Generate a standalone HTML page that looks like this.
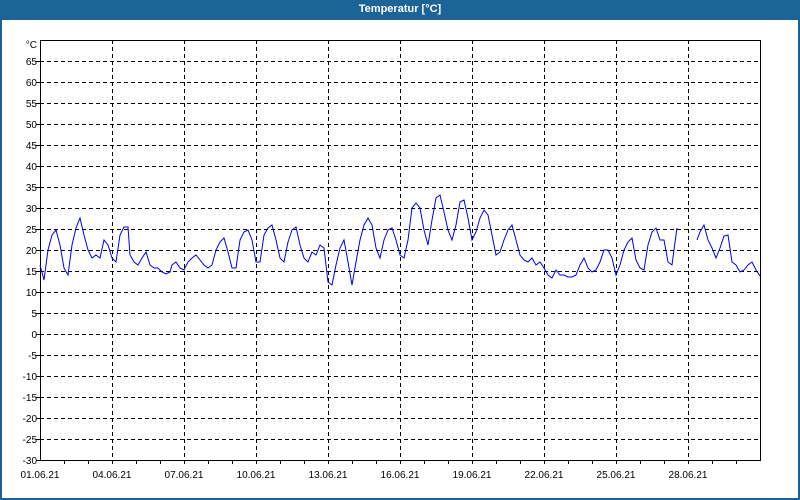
<!DOCTYPE html>
<html><head><style>
body{margin:0;width:800px;height:500px;overflow:hidden;background:#fff;font-family:"Liberation Sans",sans-serif}
.frame{position:absolute;left:0;top:0;width:796px;height:478px;border:2px solid #1c6497;border-top:none;top:20px}
.title{position:absolute;left:0;top:0;width:800px;height:20px;background:#1c6497;color:#fff;font-weight:bold;font-size:11px;text-align:center;line-height:19px}
</style></head><body>
<div class="title">Temperatur [°C]</div>
<div class="frame"></div>
<svg width="800" height="500" style="position:absolute;left:0;top:0" font-family="Liberation Sans, sans-serif" font-size="10">
<g stroke="#000" stroke-dasharray="4,3" stroke-width="1">
<path d="M40 61.5H760M40 82.5H760M40 103.5H760M40 124.5H760M40 145.5H760M40 166.5H760M40 187.5H760M40 208.5H760M40 229.5H760M40 250.5H760M40 271.5H760M40 292.5H760M40 313.5H760M40 334.5H760M40 355.5H760M40 376.5H760M40 397.5H760M40 418.5H760M40 439.5H760"/>
<path d="M112.5 40V460M184.5 40V460M256.5 40V460M328.5 40V460M400.5 40V460M472.5 40V460M544.5 40V460M616.5 40V460M688.5 40V460"/>
</g>
<rect x="40.5" y="40.5" width="720" height="420" fill="none" stroke="#000"/>
<g stroke="#000"><path d="M64.5 460v4M88.5 460v4M112.5 460v4M136.5 460v4M160.5 460v4M184.5 460v4M208.5 460v4M232.5 460v4M256.5 460v4M280.5 460v4M304.5 460v4M328.5 460v4M352.5 460v4M376.5 460v4M400.5 460v4M424.5 460v4M448.5 460v4M472.5 460v4M496.5 460v4M520.5 460v4M544.5 460v4M568.5 460v4M592.5 460v4M616.5 460v4M640.5 460v4M664.5 460v4M688.5 460v4M712.5 460v4M736.5 460v4M36 460.5h4M36 439.5h4M36 418.5h4M36 397.5h4M36 376.5h4M36 355.5h4M36 334.5h4M36 313.5h4M36 292.5h4M36 271.5h4M36 250.5h4M36 229.5h4M36 208.5h4M36 187.5h4M36 166.5h4M36 145.5h4M36 124.5h4M36 103.5h4M36 82.5h4M36 61.5h4"/></g>
<g text-anchor="end" fill="#000">
<text x="37" y="48">°C</text><text x="37" y="65">65</text><text x="37" y="86">60</text><text x="37" y="107">55</text><text x="37" y="128">50</text><text x="37" y="149">45</text><text x="37" y="170">40</text><text x="37" y="191">35</text><text x="37" y="212">30</text><text x="37" y="233">25</text><text x="37" y="254">20</text><text x="37" y="275">15</text><text x="37" y="296">10</text><text x="37" y="317">5</text><text x="37" y="338">0</text><text x="37" y="359">-5</text><text x="37" y="380">-10</text><text x="37" y="401">-15</text><text x="37" y="422">-20</text><text x="37" y="443">-25</text><text x="37" y="464">-30</text>
</g>
<g text-anchor="middle" fill="#000">
<text x="40" y="478">01.06.21</text><text x="112" y="478">04.06.21</text><text x="184" y="478">07.06.21</text><text x="256" y="478">10.06.21</text><text x="328" y="478">13.06.21</text><text x="400" y="478">16.06.21</text><text x="472" y="478">19.06.21</text><text x="544" y="478">22.06.21</text><text x="616" y="478">25.06.21</text><text x="688" y="478">28.06.21</text>
</g>
<g fill="none" stroke="#0000ee" stroke-width="1">
<polyline points="40,265 44,280 48,250 52,235 56,230 60,245 64,268 68,275 72,245 76,228 80,218 84,235 88,250 92,258 96,255 100,258 104,240 108,245 112,258 116,262 120,235 124,227 128,227 130,255 134,262 138,265 142,258 146,252 150,265 154,268 158,268 162,272 166,274 170,272 172,265 176,262 180,268 184,270 188,262 192,258 196,255 200,260 204,265 208,268 212,265 216,250 220,242 224,238 228,252 232,268 236,268 240,240 244,232 248,230 252,240 256,262 260,262 264,235 268,228 272,225 276,240 280,258 284,262 288,242 292,230 296,227 300,245 304,258 308,262 312,252 316,255 320,245 324,248 328,282 332,285 336,265 340,248 344,240 348,262 352,285 356,262 360,240 364,225 368,218 372,225 376,248 380,258 384,240 388,230 392,228 396,240 400,255 404,258 408,240 412,208 416,203 420,208 424,230 428,245 432,220 436,198 440,195 444,212 448,230 452,240 456,225 460,202 464,200 468,218 472,240 476,232 480,218 484,210 488,215 492,235 496,255 500,252 504,240 508,230 512,225 516,240 520,255 524,260 528,262 532,258 536,265 540,262 544,268 548,275 552,278 556,270 560,275 564,275 568,277 572,277 576,275 580,265 584,258 588,268 592,272 596,270 600,262 604,250 608,250 612,258 616,275 620,265 624,250 628,242 632,238 636,260 640,268 644,270 648,245 652,232 656,228 660,240 664,240 668,262 672,265 676,235 677,228"/>
<polyline points="697,240 700,232 704,225 708,240 712,248 716,258 720,248 724,236 728,235 732,262 736,265 740,272 744,270 748,265 752,262 756,270 760,276"/>
</g>
</svg>
</body></html>
